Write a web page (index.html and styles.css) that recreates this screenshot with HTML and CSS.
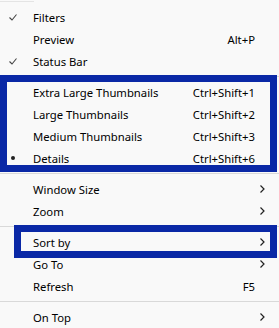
FILE: index.html
```html
<!DOCTYPE html>
<html lang="en">
<head>
  <meta charset="UTF-8" />
  <title>View menu</title>
  <link rel="stylesheet" href="styles.css">
</head>
<body>
  <div class="menu">
    <div class="top-line"></div>

    <div class="item">
      <span class="mark"><svg width="8" height="7" viewBox="0 0 8 7"><polyline points="0.5,3.5 3,6 7.5,0.5" /></svg></span>
      <span class="label">Filters</span>
      <span class="key"></span>
    </div>
    <div class="item">
      <span class="mark"></span>
      <span class="label">Preview</span>
      <span class="key">Alt+P</span>
    </div>
    <div class="item">
      <span class="mark"><svg width="8" height="7" viewBox="0 0 8 7"><polyline points="0.5,3.5 3,6 7.5,0.5" /></svg></span>
      <span class="label">Status Bar</span>
      <span class="key"></span>
    </div>

    <div class="sep"></div>

    <div class="item">
      <span class="mark"></span>
      <span class="label">Extra Large Thumbnails</span>
      <span class="key">Ctrl+Shift+1</span>
    </div>
    <div class="item">
      <span class="mark"></span>
      <span class="label">Large Thumbnails</span>
      <span class="key">Ctrl+Shift+2</span>
    </div>
    <div class="item">
      <span class="mark"></span>
      <span class="label">Medium Thumbnails</span>
      <span class="key">Ctrl+Shift+3</span>
    </div>
    <div class="item">
      <span class="mark"><span class="dot"></span></span>
      <span class="label">Details</span>
      <span class="key">Ctrl+Shift+6</span>
    </div>

    <div class="sep"></div>

    <div class="item">
      <span class="mark"></span>
      <span class="label">Window Size</span>
      <span class="arrow"><svg width="5" height="8" viewBox="0 0 5 8"><polyline points="0.5,0.5 4,4 0.5,7.5" /></svg></span>
    </div>
    <div class="item">
      <span class="mark"></span>
      <span class="label">Zoom</span>
      <span class="arrow"><svg width="5" height="8" viewBox="0 0 5 8"><polyline points="0.5,0.5 4,4 0.5,7.5" /></svg></span>
    </div>

    <div class="sep"></div>

    <div class="item">
      <span class="mark"></span>
      <span class="label">Sort by</span>
      <span class="arrow"><svg width="5" height="8" viewBox="0 0 5 8"><polyline points="0.5,0.5 4,4 0.5,7.5" /></svg></span>
    </div>
    <div class="item">
      <span class="mark"></span>
      <span class="label">Go To</span>
      <span class="arrow"><svg width="5" height="8" viewBox="0 0 5 8"><polyline points="0.5,0.5 4,4 0.5,7.5" /></svg></span>
    </div>
    <div class="item">
      <span class="mark"></span>
      <span class="label">Refresh</span>
      <span class="key">F5</span>
    </div>

    <div class="sep"></div>

    <div class="item">
      <span class="mark"></span>
      <span class="label">On Top</span>
      <span class="arrow"><svg width="5" height="8" viewBox="0 0 5 8"><polyline points="0.5,0.5 4,4 0.5,7.5" /></svg></span>
    </div>

    <!-- highlight boxes drawn over the menu -->
    <div class="box box-views"></div>
    <div class="box box-sort"></div>
  </div>
</body>
</html>
```

FILE: styles.css
```css
body {
  margin: 0;
  background-color: #f9f9f9;
  font-family: 'Noto Sans', 'Open Sans', sans-serif;
  font-size: 11.3px;
  color: #000;
}

.menu {
  position: relative;
  width: 279px;
  height: 328px;
  overflow: hidden;
  padding-top: 6px;
  box-sizing: border-box;
}

.top-line {
  position: absolute;
  top: 1px;
  left: 0;
  width: 34px;
  height: 1px;
  background-color: #e4e4e4;
}

.item {
  display: flex;
  align-items: center;
  height: 22px;
}

.mark {
  width: 33px;
  display: flex;
  justify-content: center;
  padding-right: 8px;
  box-sizing: border-box;
}

.mark svg polyline {
  fill: none;
  stroke: #444;
  stroke-width: 1.1;
}

.dot {
  width: 4px;
  height: 4px;
  border-radius: 50%;
  background-color: #222;
}

.label {
  flex: 1;
}

.key {
  padding-right: 24px;
}

.arrow {
  display: flex;
  width: 5px;
  margin-right: 14px;
}

.arrow svg polyline {
  fill: none;
  stroke: #222;
  stroke-width: 1.2;
}

.sep {
  height: 9px;
  display: flex;
  align-items: center;
}

.sep::after {
  content: "";
  display: block;
  width: 100%;
  height: 1px;
  background-color: #d9d9d9;
}

.box {
  position: absolute;
  border: 7px solid #0a28a6;
}

.box-views {
  top: 75px;
  left: 0;
  width: 263px;
  height: 83px;
}

.box-sort {
  top: 225px;
  left: 14px;
  width: 249px;
  height: 19px;
}
```
